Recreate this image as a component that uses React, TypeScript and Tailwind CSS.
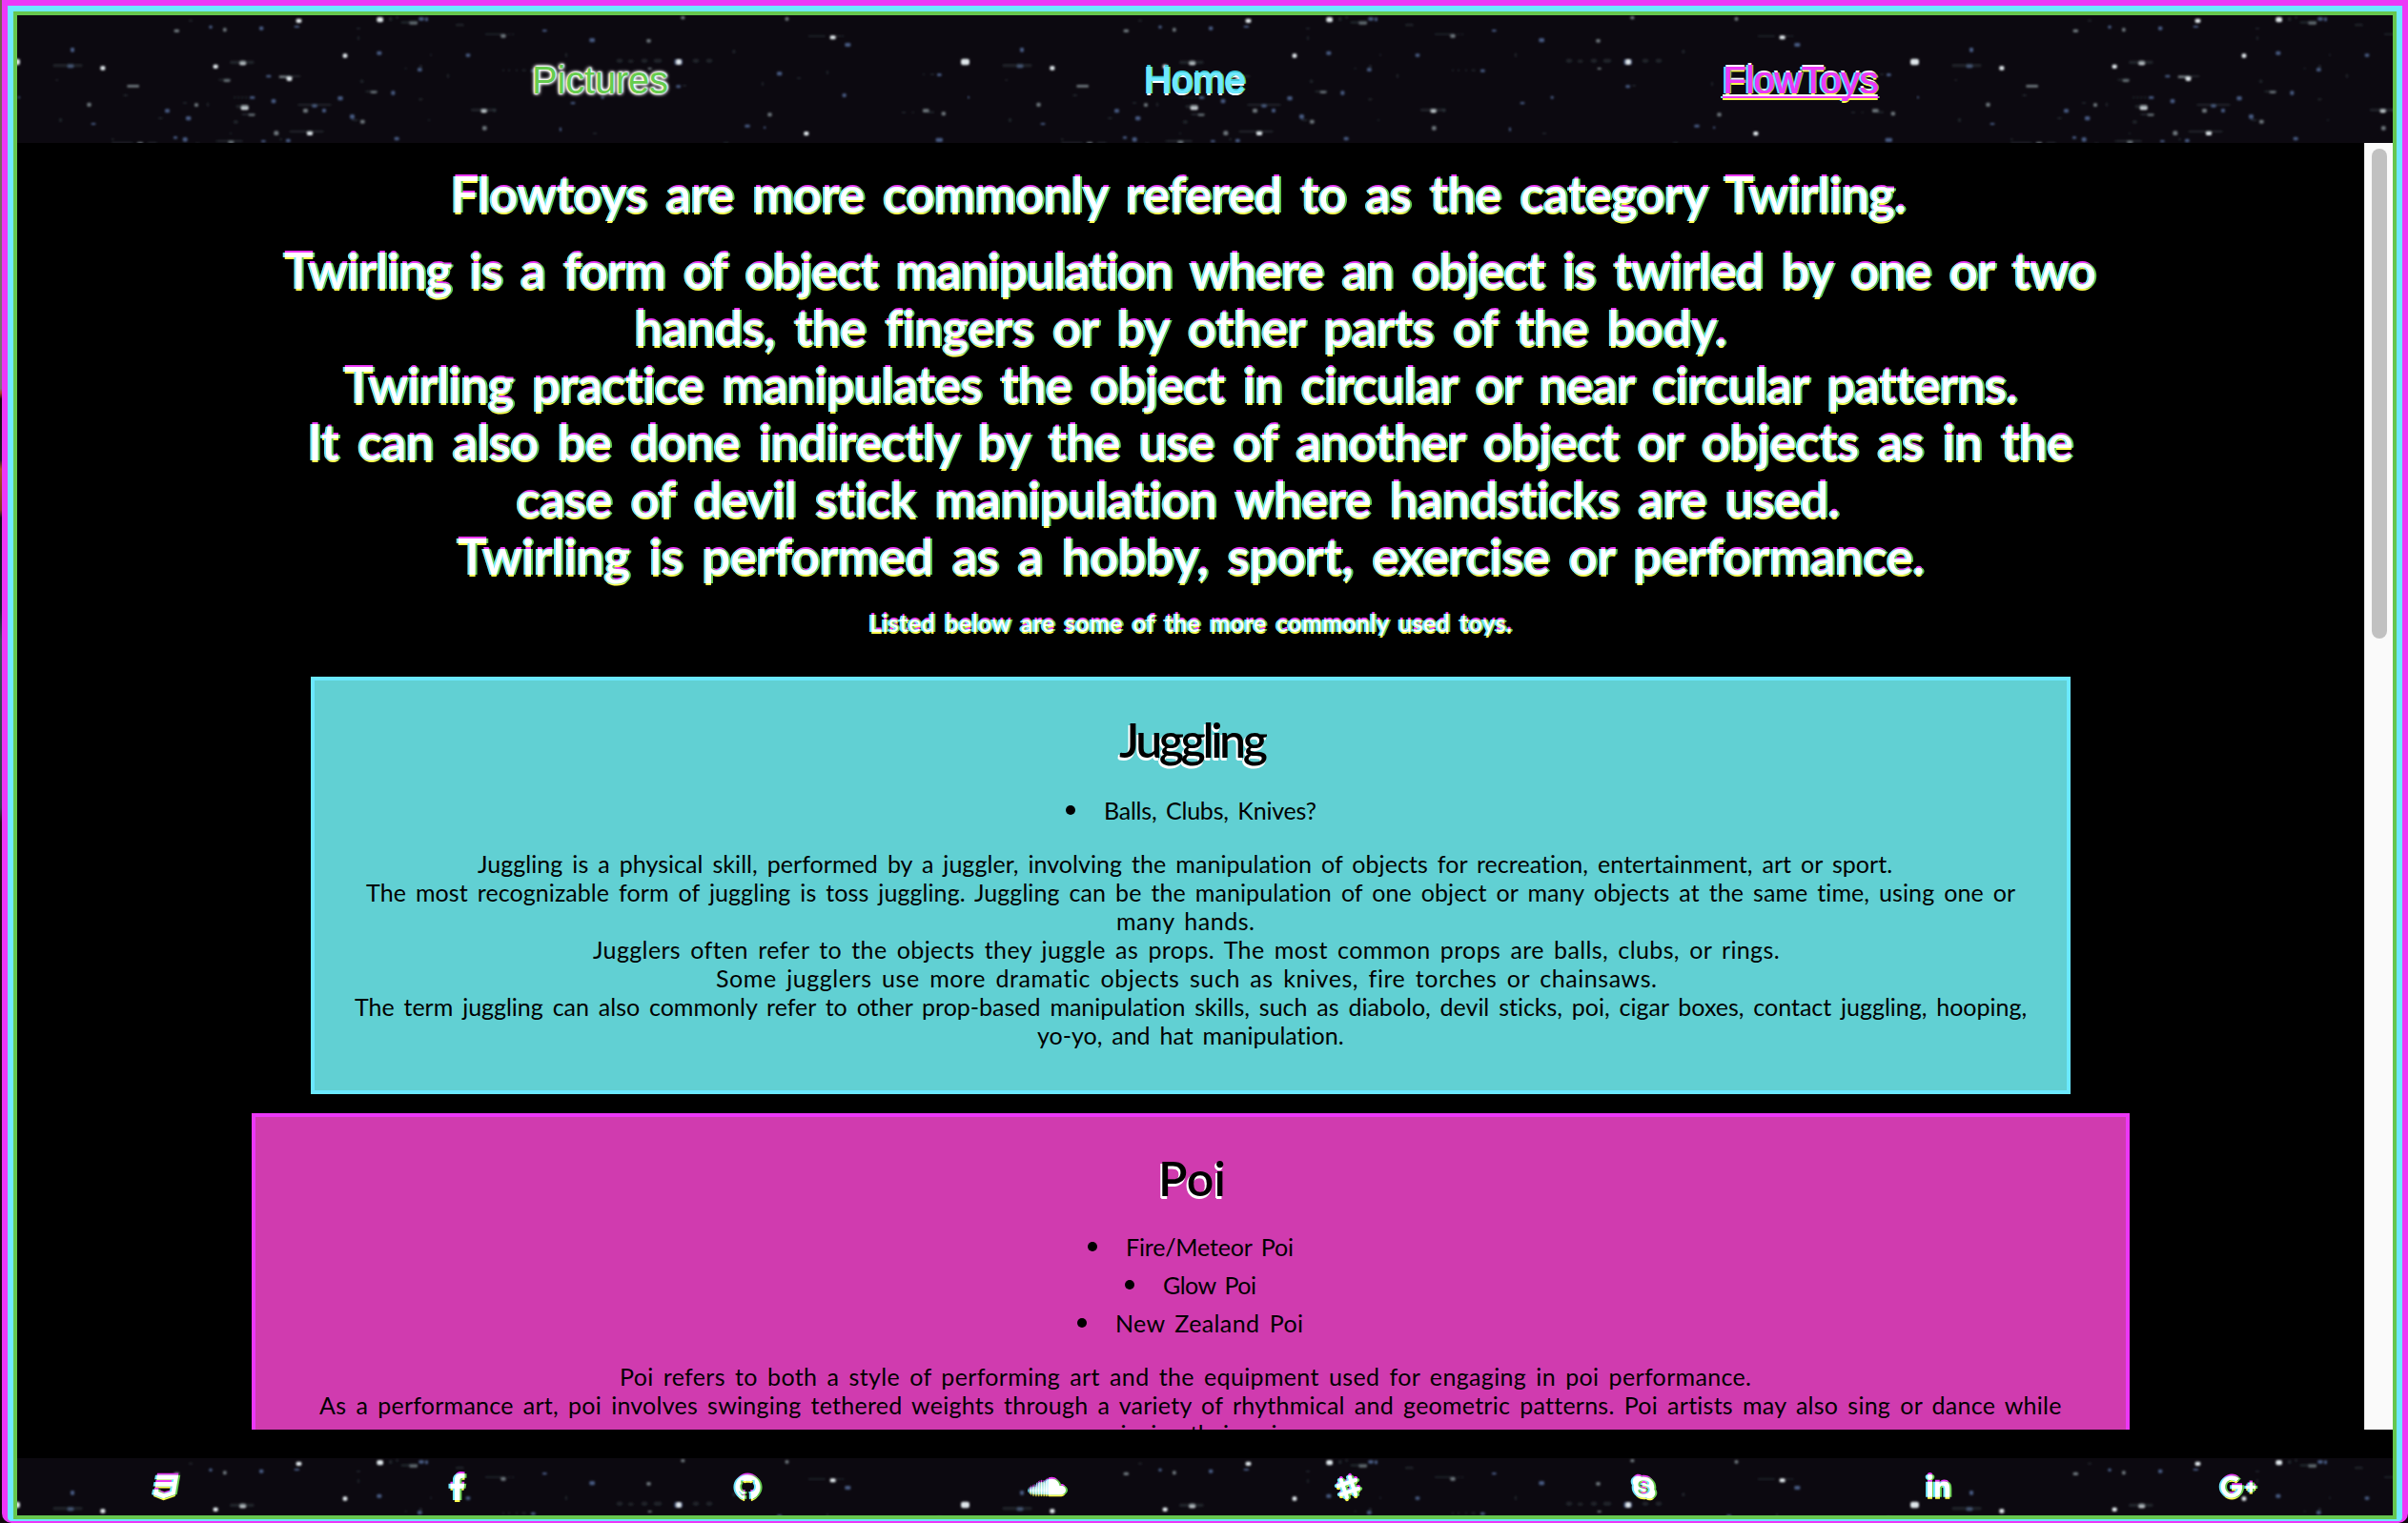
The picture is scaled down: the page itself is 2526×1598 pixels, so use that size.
import { useLayoutEffect, useRef, useState } from "react";
import type { ComponentType } from "react";
import {
  FaCss3,
  FaFacebookF,
  FaGithub,
  FaSoundcloud,
  FaSlackHash,
  FaSkype,
  FaLinkedinIn,
  FaGooglePlusG,
} from "react-icons/fa";

/* Star tile: x, y, width, height, tone, in a 2988 x 402 grid (thirds of a pixel). */
type Star = [number, number, number, number, "w" | "b" | "g" | "s"];

const STARS: Star[] = [
  [494, 44, 16, 10, "g"], [540, 14, 12, 6, "s"], [604, 32, 10, 10, "b"], [648, 40, 11, 12, "g"], [762, 35, 13, 12, "b"],
  [878, 11, 17, 13, "w"], [872, 33, 16, 6, "b"], [1132, 6, 20, 16, "w"], [1170, 6, 10, 12, "s"], [1192, 3, 8, 8, "s"],
  [1234, 19, 26, 10, "g"], [1228, 19, 50, 7, "s"], [1264, 6, 16, 11, "b"], [1284, 7, 9, 12, "b"], [1380, 27, 26, 7, "s"],
  [1522, 59, 16, 12, "g"], [1497, 57, 60, 5, "s"], [1068, 39, 12, 5, "s"], [1071, 66, 6, 12, "s"],
  [168, 102, 12, 14, "b"], [158, 154, 20, 12, "b"], [150, 154, 92, 9, "s"], [262, 160, 15, 13, "w"],
  [617, 155, 15, 13, "w"], [700, 143, 20, 14, "w"], [700, 143, 76, 10, "s"], [824, 190, 34, 8, "g"], [848, 191, 17, 16, "w"],
  [784, 188, 15, 8, "b"], [862, 189, 50, 6, "s"], [650, 200, 20, 10, "g"], [650, 200, 40, 6, "s"], [346, 219, 38, 8, "g"],
  [1025, 121, 14, 13, "w"], [1132, 113, 15, 12, "b"], [1412, 121, 14, 10, "b"], [1299, 122, 6, 6, "s"], [1260, 166, 14, 11, "b"],
  [1266, 156, 8, 14, "s"], [1220, 164, 6, 6, "s"], [1353, 185, 6, 12, "s"], [122, 201, 7, 6, "s"], [1080, 203, 10, 10, "s"],
  [1112, 237, 20, 9, "g"], [1112, 237, 40, 6, "s"], [1177, 238, 12, 13, "b"], [1009, 255, 16, 13, "b"], [1264, 261, 12, 7, "s"],
  [334, 249, 14, 6, "s"], [220, 275, 13, 13, "g"], [522, 273, 12, 6, "s"], [558, 277, 12, 11, "g"], [597, 275, 6, 12, "s"],
  [465, 295, 15, 12, "b"], [800, 264, 14, 13, "b"], [732, 255, 16, 8, "b"], [682, 255, 6, 7, "s"], [694, 255, 6, 7, "s"],
  [706, 255, 6, 7, "s"], [718, 255, 6, 7, "s"], [704, 283, 24, 15, "w"], [704, 283, 38, 9, "s"], [928, 279, 16, 11, "b"],
  [925, 279, 106, 6, "s"], [900, 294, 15, 13, "g"], [960, 294, 12, 12, "b"], [728, 309, 20, 8, "g"], [724, 309, 44, 6, "s"],
  [1047, 312, 15, 14, "b"], [1053, 327, 20, 6, "s"], [1080, 329, 14, 12, "g"], [531, 318, 16, 13, "b"], [444, 321, 14, 6, "s"],
  [132, 324, 9, 12, "s"], [233, 339, 14, 6, "b"], [681, 331, 14, 10, "s"], [1460, 294, 18, 13, "w"], [1460, 294, 80, 8, "s"],
  [1464, 349, 14, 13, "g"], [1293, 327, 6, 6, "s"], [808, 364, 15, 14, "g"], [912, 364, 18, 14, "w"], [900, 363, 108, 6, "s"],
  [669, 369, 6, 6, "s"], [521, 384, 15, 14, "b"], [492, 381, 12, 8, "b"], [664, 394, 18, 10, "g"], [660, 393, 84, 6, "s"],
  [378, 399, 18, 9, "g"], [324, 399, 66, 6, "s"], [410, 399, 30, 6, "s"], [768, 393, 14, 7, "b"], [846, 389, 14, 11, "b"],
  [826, 387, 8, 7, "s"], [1187, 383, 15, 11, "b"], [297, 387, 7, 7, "s"], [3, 255, 6, 7, "b"], [560, 401, 16, 4, "s"],
  [1545, 57, 6, 6, "s"], [1557, 57, 6, 6, "s"], [1653, 45, 14, 7, "b"], [1801, 72, 17, 13, "b"], [1981, 75, 13, 11, "g"],
  [2089, 3, 12, 10, "g"], [2417, 6, 11, 11, "g"], [2558, 64, 18, 12, "w"], [2511, 63, 54, 5, "s"], [2580, 63, 12, 5, "s"],
  [2594, 63, 8, 5, "s"], [2605, 87, 18, 12, "b"], [2251, 109, 9, 11, "s"], [1725, 119, 6, 13, "s"], [1887, 137, 18, 12, "s"],
  [1923, 140, 16, 9, "s"], [1965, 137, 18, 12, "s"], [2004, 137, 24, 12, "s"], [2068, 138, 26, 18, "b"], [2074, 138, 16, 18, "w"],
  [2127, 137, 18, 12, "s"], [2169, 137, 18, 12, "s"], [2970, 137, 27, 20, "w"], [-18, 137, 27, 20, "w"], [2391, 178, 16, 12, "b"],
  [2454, 195, 12, 6, "s"], [2343, 210, 6, 12, "s"], [2547, 174, 6, 12, "s"], [1985, 165, 12, 6, "g"], [1527, 170, 6, 6, "s"],
  [1545, 170, 6, 6, "s"], [1569, 170, 6, 6, "s"], [1589, 170, 12, 6, "s"], [1617, 170, 14, 9, "b"], [2074, 220, 14, 9, "b"],
  [2094, 219, 12, 5, "s"], [2597, 246, 12, 12, "b"], [1742, 273, 14, 7, "b"], [1838, 254, 9, 9, "b"], [1497, 294, 10, 11, "s"],
  [2362, 307, 13, 12, "g"], [2850, 295, 20, 11, "g"], [2864, 302, 22, 6, "s"], [2909, 304, 13, 12, "g"], [2784, 303, 12, 6, "s"],
  [2816, 303, 6, 6, "s"], [2290, 344, 16, 9, "b"], [2349, 350, 7, 7, "b"], [2476, 366, 15, 13, "w"], [2891, 386, 22, 13, "b"],
  [1707, 353, 6, 12, "b"], [1812, 369, 12, 6, "s"], [2223, 399, 16, 5, "s"], [2895, 183, 14, 9, "b"], [2874, 183, 12, 6, "s"],
  [2850, 183, 6, 6, "s"],
];

const TONES = {
  w: "fill-[#dfe6ea]",
  b: "fill-[#5f7cb0] opacity-70",
  g: "fill-[#8d999f] opacity-75",
  s: "fill-[#39464c] opacity-45",
};

function Starfield({ id }: { id: string }) {
  return (
    <svg className="absolute inset-0 h-full w-full" aria-hidden="true">
      <defs>
        <filter id={`${id}-soft`} x="-5%" y="-5%" width="110%" height="110%">
          <feGaussianBlur stdDeviation="2.6" />
        </filter>
        <pattern id={id} width="996" height="134" patternUnits="userSpaceOnUse">
          <g transform="scale(0.33333)" filter={`url(#${id}-soft)`}>
            {STARS.map(([x, y, w, h, tone], i) => (
              <rect
                key={i}
                x={tone === "s" && w > 35 ? x - w * 0.4 : x}
                y={y}
                width={w}
                height={h}
                rx={Math.min(w, h) / 3}
                className={TONES[tone]}
              />
            ))}
          </g>
        </pattern>
      </defs>
      <rect width="100%" height="100%" fill={`url(#${id})`} />
    </svg>
  );
}

/* One line of lettering whose tracking is measured so that it spans `width` pixels. */
function FitLine({ text, left, width }: { text: string; left: number; width: number }) {
  const ref = useRef<HTMLSpanElement>(null);
  const [spacing, setSpacing] = useState(0);
  useLayoutEffect(() => {
    const el = ref.current;
    if (!el) return;
    el.style.letterSpacing = "0px";
    const natural = el.getBoundingClientRect().width;
    const next = (width - natural) / Math.max(1, text.length - 1);
    el.style.letterSpacing = `${next}px`;
    setSpacing(next);
  }, [text, width]);
  return (
    <span className="block whitespace-nowrap" style={{ marginLeft: left }}>
      <span ref={ref} className="[word-spacing:0.14em]" style={{ letterSpacing: spacing }}>
        {text}
      </span>
    </span>
  );
}

type Line = [string, number, number];

function Lines({ lines, origin }: { lines: Line[]; origin: number }) {
  return (
    <>
      {lines.map(([text, from, to]) => (
        <FitLine key={text} text={text} left={from - origin} width={to - from} />
      ))}
    </>
  );
}

function Bullets({ items, origin }: { items: Line[]; origin: number }) {
  return (
    <ul className="text-[25px] leading-[40px]">
      {items.map(([text, from, to]) => (
        <li key={text} className="flex items-center" style={{ paddingLeft: from - origin - 40 }}>
          <span className="mr-[30px] size-[10px] rounded-full bg-black" />
          <FitLine text={text} left={0} width={to - from} />
        </li>
      ))}
    </ul>
  );
}

const INTRO: Line[] = [
  ["Twirling is a form of object manipulation where an object is twirled by one or two", 298, 2200],
  ["hands, the fingers or by other parts of the body.", 666, 1811],
  ["Twirling practice manipulates the object in circular or near circular patterns.", 361, 2116],
  ["It can also be done indirectly by the use of another object or objects as in the", 323, 2175],
  ["case of devil stick manipulation where handsticks are used.", 542, 1933],
  ["Twirling is performed as a hobby, sport, exercise or performance.", 480, 2019],
];

const JUGGLING: Line[] = [
  ["Juggling is a physical skill, performed by a juggler, involving the manipulation of objects for recreation, entertainment, art or sport.", 501, 1986],
  ["The most recognizable form of juggling is toss juggling. Juggling can be the manipulation of one object or many objects at the same time, using one or", 384, 2115],
  ["many hands.", 1171, 1316],
  ["Jugglers often refer to the objects they juggle as props. The most common props are balls, clubs, or rings.", 622, 1866],
  ["Some jugglers use more dramatic objects such as knives, fire torches or chainsaws.", 751, 1738],
  ["The term juggling can also commonly refer to other prop-based manipulation skills, such as diabolo, devil sticks, poi, cigar boxes, contact juggling, hooping,", 372, 2127],
  ["yo-yo, and hat manipulation.", 1088, 1410],
];

const POI: Line[] = [
  ["Poi refers to both a style of performing art and the equipment used for engaging in poi performance.", 650, 1837],
  ["As a performance art, poi involves swinging tethered weights through a variety of rhythmical and geometric patterns. Poi artists may also sing or dance while", 335, 2162],
  ["swinging their poi.", 1146, 1345],
];

const SOCIAL: { name: string; icon: ComponentType<{ className?: string }>; size: string }[] = [
  { name: "CSS3", icon: FaCss3, size: "h-[28px] w-[28px]" },
  { name: "Facebook", icon: FaFacebookF, size: "h-[28px] w-[18px]" },
  { name: "GitHub", icon: FaGithub, size: "h-[27px] w-[27px]" },
  { name: "SoundCloud", icon: FaSoundcloud, size: "h-[34px] w-[38px]" },
  { name: "Slack", icon: FaSlackHash, size: "h-[29px] w-[29px]" },
  { name: "Skype", icon: FaSkype, size: "h-[27px] w-[27px]" },
  { name: "LinkedIn", icon: FaLinkedinIn, size: "h-[27px] w-[27px]" },
  { name: "Google Plus", icon: FaGooglePlusG, size: "h-[38px] w-[38px]" },
];

const COPIES = [
  "text-[#ffff4d] translate-y-[2px]",
  "text-[#ec38f7] -translate-y-[2px]",
  "text-[#66cc4e] translate-x-[2px]",
  "text-[#6ee8ff] -translate-x-[2px]",
  "relative text-white",
];

const NEON = "[text-shadow:-2px_0_#6ee8ff,2px_0_#66cc4e,0_-2px_#ec38f7,0_2px_#ffff4d]";

export default function App() {
  return (
    <div className="h-[1598px] w-[2526px] overflow-hidden bg-[linear-gradient(#75604f,#777_25.5%,#a04a20_25.8%,#140b0c_26.2%,#181c24_30.2%,#a85020_30.8%,#7c3a1c_33.5%,#0c1018_34%,#10222e_40%,#38505c_42%,#30424c_53%,#241016_54%,#12080e_100%)] pl-[2px]">
      <div className="h-full rounded-b-[10px] border-x-[6px] border-t-[6px] border-b-2 border-[#ec38f7] bg-[#ec38f7]">
        <div className="h-full rounded-b-[4px] border-x-[6px] border-t-[6px] border-b-2 border-[#6ee8ff] bg-[#6ee8ff]">
          <div className="flex h-full flex-col border-4 border-[#66c64e] bg-black">
            <header className="relative h-[134px] shrink-0 overflow-hidden bg-[#0c0910]">
              <Starfield id="sky-top" />
              <nav className="relative flex pt-[45px] pl-[540px] font-['Liberation_Sans',sans-serif] text-[40px] leading-[46px]">
                <a className="w-[642px] tracking-[-0.2px] text-[#66cc4e] [text-shadow:0_0_3px_#fff,0_0_4px_#fff,0_0_5px_#fff,-1px_1px_2px_#fff,1px_-1px_2px_#fff]">
                  Pictures
                </a>
                <a className="w-[607px] text-[#6ee8ff] [text-shadow:1px_0_#6ee8ff,-1px_0_#6ee8ff,0_-2px_#40c8d8,2px_0_#66cc4e,0_2px_#fff]">
                  Home
                </a>
                <a className="tracking-[-0.5px] text-[#ec38f7] underline decoration-2 underline-offset-[3px] [text-decoration-skip-ink:none] [text-shadow:1px_0_#ec38f7,-2px_0_#6ee8ff,2px_0_#66cc4e,0_-2px_#fff,0_2px_#ffff4d]">
                  FlowToys
                </a>
              </nav>
            </header>

            <main className="flex h-[1350px] shrink-0 overflow-hidden font-[Lato,sans-serif] text-black">
              <div className="h-full w-[2462px] shrink-0 overflow-hidden pt-[23px]">
                <div className={`text-[52px] leading-[60px] font-semibold text-white ${NEON}`}>
                  <h1 className="mb-5">
                    <FitLine text="Flowtoys are more commonly refered to as the category Twirling." left={455} width={1527} />
                  </h1>
                  <Lines lines={INTRO} origin={18} />
                </div>
                <h4 className={`mt-[25px] text-[25px] leading-[30px] font-semibold text-white ${NEON}`}>
                  <FitLine text="Listed below are some of the more commonly used toys." left={894} width={674} />
                </h4>

                <section className="mt-[42px] ml-[308px] h-[438px] w-[1846px] border-4 border-[#6be8ff] bg-[#61d0d3] pt-8">
                  <h2 className="text-[50px] leading-[60px] font-semibold [text-shadow:-2px_2px_#fff,-1px_3px_#fff]">
                    <FitLine text="Juggling" left={844} width={156} />
                  </h2>
                  <div className="mt-6">
                    <Bullets items={[["Balls, Clubs, Knives?", 1158, 1381]]} origin={330} />
                  </div>
                  <p className="mt-[21px] text-[25px] leading-[30px]">
                    <Lines lines={JUGGLING} origin={330} />
                  </p>
                </section>

                <section className="mt-5 ml-[246px] h-[480px] w-[1970px] border-4 border-[#ec38f7] bg-[#d03baf] pt-[34px]">
                  <h2 className="text-[50px] leading-[60px] font-semibold [text-shadow:-2px_2px_#fff,-1px_3px_#fff]">
                    <FitLine text="Poi" left={947} width={71} />
                  </h2>
                  <div className="mt-[22px]">
                    <Bullets
                      items={[
                        ["Fire/Meteor Poi", 1181, 1357],
                        ["Glow Poi", 1220, 1318],
                        ["New Zealand Poi", 1170, 1367],
                      ]}
                      origin={268}
                    />
                  </div>
                  <p className="mt-[21px] text-[25px] leading-[30px]">
                    <Lines lines={POI} origin={268} />
                  </p>
                </section>
              </div>
              <div className="h-full w-[30px] shrink-0 border-l border-[#e8e8e8] bg-[#fafafa] pt-[6px] pl-[7px]">
                <div className="h-[514px] w-[16px] rounded-full bg-[#c1c1c1]" />
              </div>
            </main>

            <footer className="relative mt-[30px] h-[60px] shrink-0 overflow-hidden bg-[#0c0910]">
              <Starfield id="sky-bottom" />
              <div className="relative flex h-full items-center gap-[282px] pl-[143px]">
                {SOCIAL.map(({ name, icon: Icon, size }) => (
                  <a key={name} aria-label={name} className="grid shrink-0">
                    {COPIES.map((tone) => (
                      <span key={tone} className={`[grid-area:1/1] ${tone}`}>
                        <Icon className={size} />
                      </span>
                    ))}
                  </a>
                ))}
              </div>
            </footer>
          </div>
        </div>
      </div>
    </div>
  );
}
